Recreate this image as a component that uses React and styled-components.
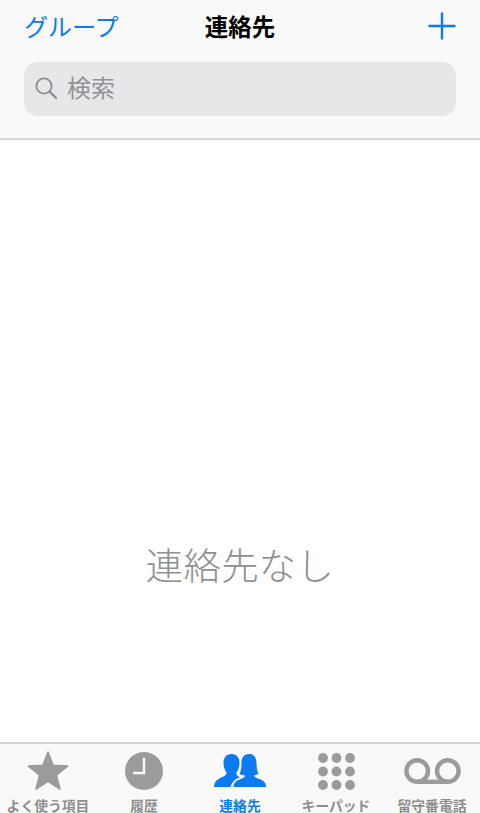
import React from 'react';
import styled, { createGlobalStyle } from 'styled-components';

const Global = createGlobalStyle`
html, body {
  margin:0;
  padding:0;
  background:#ffffff;
}
`;
const FONT = `"Noto Sans CJK JP", "Noto Sans", sans-serif`;
const BLUE = '#0a7bf0';
const GREY = '#9b9b9b';

const Screen = styled.div`
width:480px;
height:813px;
display:flex;
flex-direction:column;
overflow:hidden;
font-family:${FONT};
`;
const Header = styled.header`
height:138px;
flex-shrink:0;
padding:0 24px;
background:#f9f9f9;
border-bottom:2px solid #d6d6d8;
`;
const NavRow = styled.div`
height:62px;
display:grid;
grid-template-columns:1fr auto 1fr;
align-items:center;
padding-bottom:10px;
box-sizing:border-box;
`;
const BackLink = styled.span`
color:${BLUE};
font-size:24px;
line-height:28px;
`;
const Title = styled.h1`
margin:0;
color:#000000;
font-size:23.5px;
line-height:28px;
font-weight:700;
`;
const AddButton = styled.div`
justify-self:end;
display:flex;
`;
const SearchBar = styled.div`
height:54px;
box-sizing:border-box;
display:flex;
align-items:center;
gap:10px;
padding:0 0 2px 11px;
background:#e7e7e9;
border-radius:14px;
`;
const SearchText = styled.span`
color:#929296;
font-size:24px;
line-height:28px;
margin-bottom:2px;
`;
const Main = styled.main`
flex:1;
display:flex;
align-items:center;
justify-content:center;
padding-top:246px;
background:#ffffff;
`;
const EmptyText = styled.p`
margin:0;
color:#8f8f8f;
font-size:37.3px;
line-height:46px;
font-weight:300;
letter-spacing:0.4px;
`;
const TabBar = styled.nav`
height:69px;
flex-shrink:0;
display:flex;
justify-content:space-between;
background:#f9f9f9;
border-top:2px solid #d6d6d8;
`;
const Tab = styled.div`
width:96px;
display:flex;
flex-direction:column;
align-items:center;
color:${(props) => (props.$active ? BLUE : '#8e8e8e')};
`;
const IconSlot = styled.div`
height:54px;
flex-shrink:0;
display:flex;
align-items:center;
justify-content:center;
`;
const TabLabel = styled.span`
flex-shrink:0;
font-size:13.8px;
line-height:15px;
font-weight:700;
white-space:nowrap;
`;

const PlusIcon = () => (
  <svg width="28" height="28" viewBox="0 0 28 28">
    <path d="M14 0.5V27.5M0.5 14H27.5" stroke={BLUE} strokeWidth="2.4" fill="none" />
  </svg>
);
const SearchIcon = () => (
  <svg width="22" height="22" viewBox="0 0 22 22" fill="none" stroke="#8e8e92">
    <circle cx="9" cy="9" r="7.6" strokeWidth="1.8" />
    <path d="M14.5 14.5L21 21" strokeWidth="2.4" strokeLinecap="round" />
  </svg>
);
const StarIcon = () => (
  <svg width="42" height="40" viewBox="0 0 42 40">
    <path
      d="M21 1L26.2 14.3L40.6 15.1L29.4 24.2L33.1 38.2L21 30.3L8.9 38.2L12.6 24.2L1.4 15.1L15.8 14.3Z"
      fill={GREY}
      stroke={GREY}
      strokeWidth="1.5"
      strokeLinejoin="round"
    />
  </svg>
);
const ClockIcon = () => (
  <svg width="38" height="38" viewBox="0 0 38 38">
    <circle cx="19" cy="19" r="19" fill={GREY} />
    <path d="M19 6V21H8" fill="none" stroke="#f9f9f9" strokeWidth="2.4" />
  </svg>
);
const PeopleIcon = () => (
  <svg width="52" height="34" viewBox="0 0 52 34" fill={BLUE}>
    <path d="M17.5 0C23 0 25.5 4 25.5 9C25.5 13 24 16.5 22.5 18.5C22 20 22.5 21.5 24.5 22.5L26 23.2C21 25 18 28 16.5 33H0C0.3 27.5 3 25.5 7 23.8C11 22.2 13 20.5 12.5 18.5C11 16.5 9.5 13 9.5 9C9.5 4 12 0 17.5 0Z" />
    <path d="M35 0C40.5 0 42.5 4 42.5 9C42.5 13 43 17 44.5 20C42.5 21 40.5 21.2 40 21.5C40.5 23.5 43 24.2 46 25.2C50 26.5 52 29 52 33H19.5C19.5 29 22 26.5 26 25.2C29 24.2 31 23.5 31 21.5C29.5 21.2 27.5 21 25.5 20C27 17 27.5 13 27.5 9C27.5 4 29.5 0 35 0Z" />
  </svg>
);
const KeypadIcon = () => (
  <svg width="37" height="37" viewBox="0 0 37 37" fill={GREY}>
    {[5, 18.5, 32].map((cy) =>
      [5, 18.5, 32].map((cx) => <circle key={`${cx}-${cy}`} cx={cx} cy={cy} r="4.9" />)
    )}
  </svg>
);
const VoicemailIcon = () => (
  <svg width="57" height="26" viewBox="0 0 57 26" fill="none" stroke={GREY} strokeWidth="4.4">
    <circle cx="13.2" cy="13" r="10.8" />
    <circle cx="43.8" cy="13" r="10.8" />
    <path d="M13.2 23.8H43.8" />
  </svg>
);

const tabs = [
  { label: 'よく使う項目', icon: <StarIcon /> },
  { label: '履歴', icon: <ClockIcon /> },
  { label: '連絡先', icon: <PeopleIcon />, active: true },
  { label: 'キーパッド', icon: <KeypadIcon /> },
  { label: '留守番電話', icon: <VoicemailIcon /> },
];

const App = () => {
  return (
    <Screen>
      <Global />
      <Header>
        <NavRow>
          <BackLink>グループ</BackLink>
          <Title>連絡先</Title>
          <AddButton>
            <PlusIcon />
          </AddButton>
        </NavRow>
        <SearchBar>
          <SearchIcon />
          <SearchText>検索</SearchText>
        </SearchBar>
      </Header>
      <Main>
        <EmptyText>連絡先なし</EmptyText>
      </Main>
      <TabBar>
        {tabs.map((tab) => (
          <Tab key={tab.label} $active={tab.active}>
            <IconSlot>{tab.icon}</IconSlot>
            <TabLabel>{tab.label}</TabLabel>
          </Tab>
        ))}
      </TabBar>
    </Screen>
  );
};

export default App;
